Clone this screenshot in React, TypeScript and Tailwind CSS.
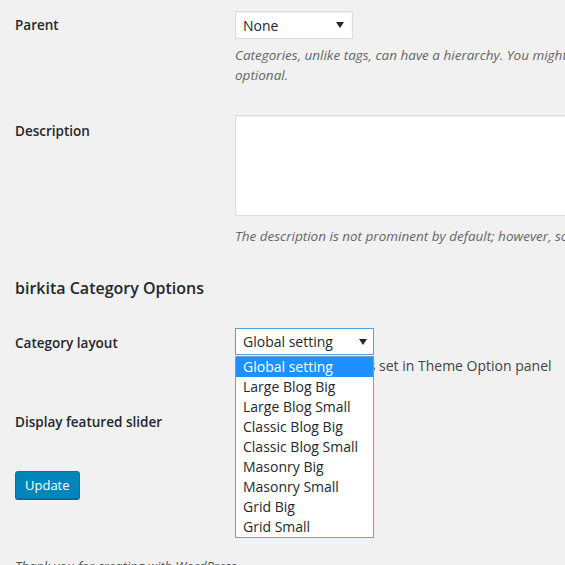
import { useState } from "react"

const layouts = [
  "Global setting",
  "Large Blog Big",
  "Large Blog Small",
  "Classic Blog Big",
  "Classic Blog Small",
  "Masonry Big",
  "Masonry Small",
  "Grid Big",
  "Grid Small",
]

function Caret() {
  return (
    <svg width="8" height="6" viewBox="0 0 8 6" className="fill-[#23282d]">
      <path d="M0 0h8L4 6z" />
    </svg>
  )
}

export default function App() {
  const [active] = useState(0)

  return (
    <div className="h-[565px] overflow-hidden bg-[#f1f1f1] pl-[15px] font-['Open_Sans',sans-serif] text-[14px] text-[#23282d]">
      {/* Parent */}
      <div className="flex pt-[11px]">
        <div className="w-[220px] shrink-0 pt-[4px] text-[13.5px] font-semibold">Parent</div>
        <div>
          <div className="flex h-[28px] w-[118px] items-center justify-between border border-[#ddd] bg-white pl-[7px] pr-[8px] shadow-[inset_0_1px_2px_rgba(0,0,0,0.07)]">
            <span>None</span>
            <Caret />
          </div>
          <p className="mt-[6px] whitespace-nowrap text-[13.5px] italic leading-[20px] text-[#666]">
            Categories, unlike tags, can have a hierarchy. You might have a Jazz category, and under that have children categories for Bebop and Big Band. Totally
            <br />
            optional.
          </p>
        </div>
      </div>

      {/* Description */}
      <div className="mt-[30px] flex">
        <div className="w-[220px] shrink-0 pt-[6px] text-[13.5px] font-semibold">Description</div>
        <div>
          <div className="h-[101px] w-[500px] border border-[#ddd] bg-white shadow-[inset_0_1px_2px_rgba(0,0,0,0.07)]" />
          <p className="mt-[10px] whitespace-nowrap text-[13.5px] italic leading-[20px] text-[#666]">
            The description is not prominent by default; however, some themes may show it.
          </p>
        </div>
      </div>

      <h2 className="mt-[30px] text-[16px] font-semibold leading-[24px]">birkita Category Options</h2>

      {/* Category layout */}
      <div className="mt-[28px] flex">
        <div className="w-[220px] shrink-0 pt-[5px] text-[13.5px] font-semibold">Category layout</div>
        <div className="relative">
          <div className="flex h-[27px] w-[139px] items-center justify-between border border-[#5b9dd9] bg-white pl-[7px] pr-[6px]">
            <span>Global setting</span>
            <Caret />
          </div>
          <p className="mt-[1px] whitespace-nowrap text-[14px] leading-[20px] text-[#444]">
            Use global settings as set in Theme Option panel
          </p>
          <ul className="absolute left-0 top-[28px] w-[139px] border border-[#7f9db9] bg-white">
            {layouts.map((l, i) => (
              <li
                key={l}
                className={`h-[20px] pl-[7px] leading-[20px] ${
                  i === active ? "bg-[#1e90ff] text-white" : "text-[#23282d]"
                }`}
              >
                {l}
              </li>
            ))}
          </ul>
        </div>
      </div>

      {/* Display featured slider */}
      <div className="mt-[33px] flex">
        <div className="w-[220px] shrink-0 pt-[3px] text-[13.5px] font-semibold">Display featured slider</div>
        <div className="h-[22px] w-[60px] border border-[#ddd] bg-white" />
      </div>

      <button
        type="button"
        className="mt-[39px] h-[28px] rounded-[3px] border border-[#0073aa] bg-[#0085ba] px-[9px] text-[13px] leading-[26px] text-white shadow-[0_1px_0_#006799]"
      >
        Update
      </button>

      <p className="mt-[58px] text-[13px] italic text-[#555]">Thank you for creating with WordPress.</p>
    </div>
  )
}
